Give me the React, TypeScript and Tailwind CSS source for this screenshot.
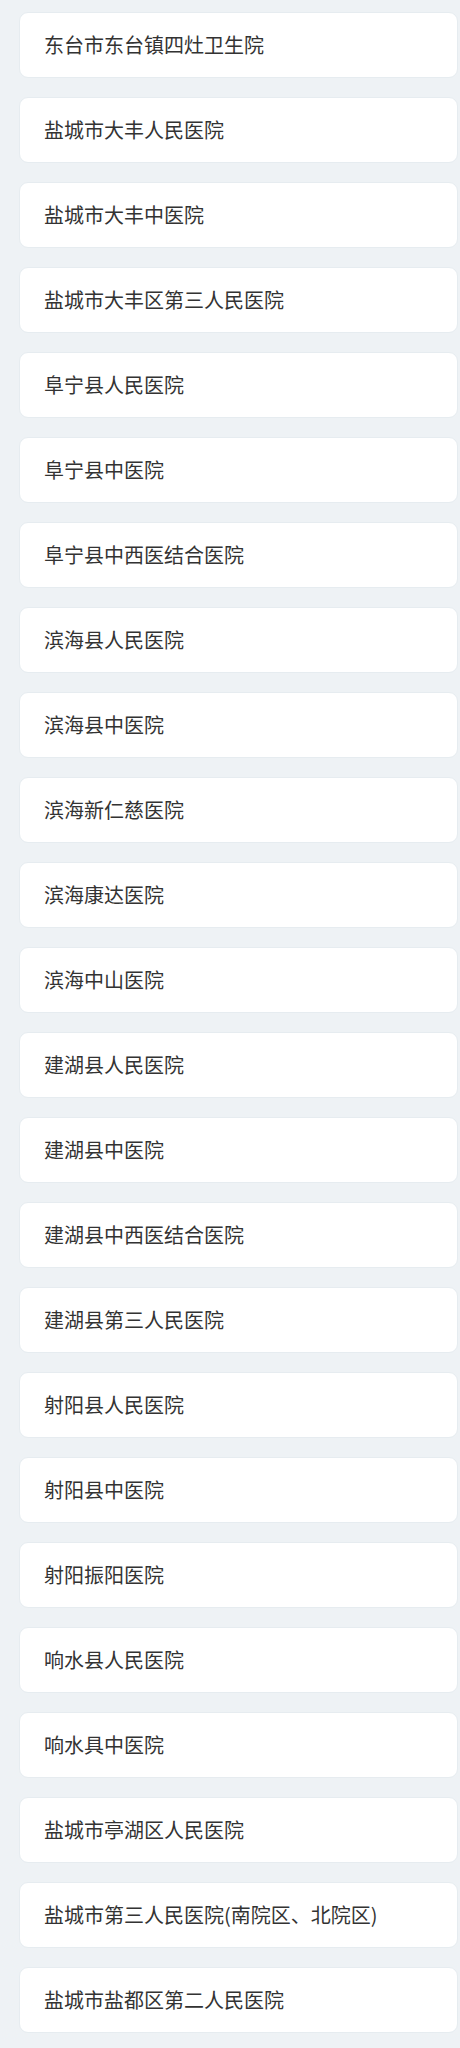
const hospitals = [
  "东台市东台镇四灶卫生院",
  "盐城市大丰人民医院",
  "盐城市大丰中医院",
  "盐城市大丰区第三人民医院",
  "阜宁县人民医院",
  "阜宁县中医院",
  "阜宁县中西医结合医院",
  "滨海县人民医院",
  "滨海县中医院",
  "滨海新仁慈医院",
  "滨海康达医院",
  "滨海中山医院",
  "建湖县人民医院",
  "建湖县中医院",
  "建湖县中西医结合医院",
  "建湖县第三人民医院",
  "射阳县人民医院",
  "射阳县中医院",
  "射阳振阳医院",
  "响水县人民医院",
  "响水具中医院",
  "盐城市亭湖区人民医院",
  "盐城市第三人民医院(南院区、北院区)",
  "盐城市盐都区第二人民医院",
];

export default function App() {
  return (
    <div
      className="min-h-[2048px] bg-[#eef2f5] pl-[19px] pr-[2px] pt-[12px] pb-4 flex flex-col gap-[19px]"
      style={{ fontFamily: '"Noto Sans CJK SC", "Noto Sans", sans-serif' }}
    >
      {hospitals.map((name) => (
        <div
          key={name}
          className="h-[66px] shrink-0 bg-white rounded-[9px] border border-[#e6ecf0] flex items-center pl-[24px] text-[20px] text-[#333] cursor-pointer"
        >
          {name}
        </div>
      ))}
    </div>
  );
}
